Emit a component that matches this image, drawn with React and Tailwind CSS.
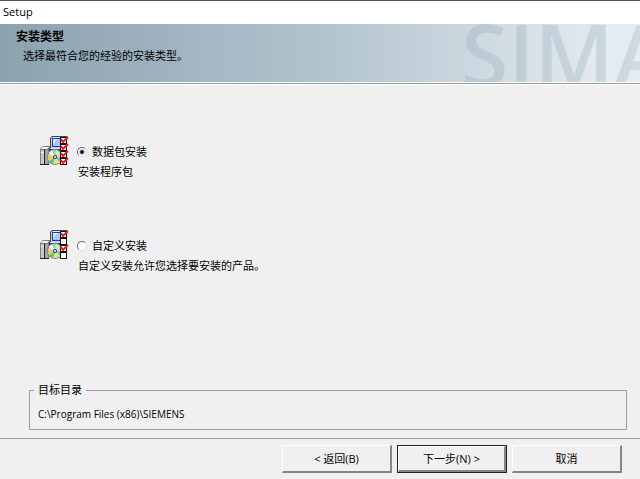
import { useState } from "react";

const options = [
    { id: "package", label: "数据包安装", description: "安装程序包", ticks: [1, 8, 15, 22] },
    { id: "custom", label: "自定义安装", description: "自定义安装允许您选择要安装的产品。", ticks: [1, 15] },
];

const SetupIcon = ({ ticks }) => (
    <svg width="29" height="30" viewBox="0 0 29 30" aria-hidden="true" className="shrink-0">
        {/* case */}
        <path d="M0 13L3 10H10V27L7 29H0Z" fill="#808080" />
        <path d="M1 13L3 11H9L7 13Z" fill="#fff" />
        <path d="M1 14H4V28H1Z" fill="#c8c8c8" />
        <path d="M5 14H8V28H5Z" fill="#a4a4a4" />
        <path d="M4 13H5V29H4ZM0 28H9V29H0Z" fill="#222" />
        <path d="M1 16H3V17H1Z" fill="#fff" />
        {/* monitor */}
        <path d="M10 2L12 0H27V12H10Z" fill="#444" />
        <path d="M11 2L13 1H26V2Z" fill="#e8e8e8" />
        <path d="M11 2H21V12H11Z" fill="#d0d0d0" />
        <path d="M12 2H21V11H12Z" fill="#1c3cb0" />
        <path d="M13 3H20V10H13Z" fill="#a4c8f0" />
        <path d="M13 3H18L13 8Z" fill="#dceafc" />
        <path d="M9 12H21V15H9Z" fill="#333" />
        <path d="M10 12H20V13H10Z" fill="#ddd" />
        {/* disc */}
        <circle cx="15" cy="21" r="8" fill="#888" />
        <circle cx="15" cy="21" r="7" fill="#d6d6d6" />
        <path d="M15 21L9 17L12 14Z" fill="#fff" />
        <path d="M15 21L12 14L16 14Z" fill="#70dce0" />
        <path d="M15 21L16 14L20 16Z" fill="#d8f090" />
        <path d="M15 21L8 20L8 24Z" fill="#e8d030" />
        <path d="M15 21L9 25L13 28Z" fill="#60c870" />
        <path d="M15 21L20 26L22 22Z" fill="#50c8c0" />
        <path d="M15 21L16 28L20 26Z" fill="#f4e060" />
        <circle cx="15" cy="21" r="2" fill="#333" />
        <circle cx="15" cy="21" r="1" fill="#fff" />
        {/* tick boxes */}
        <path d="M20 1H27V29H20Z" fill="#111" />
        {[1, 8, 15, 22].map((y) => (
            <rect key={y} x="21" y={y + 1} width="5" height="5" fill="#fff" />
        ))}
        {ticks.map((y) => (
            <path key={y} d={`M21 ${y + 2}L23 ${y + 5}L28 ${y}`} fill="none" stroke="#e81820" strokeWidth="2" />
        ))}
    </svg>
);

const raised = "border-t-white border-l-white border-r-[#858585] border-b-[#858585]";

const WizardButton = ({ children, isDefault }) => (
    <button
        type="button"
        className={`h-7 w-[110px] ${isDefault ? "border border-[#222]" : ""}`}
    >
        <span className={`flex h-full items-center justify-center border border-r-2 border-b-2 bg-[#f0f0f0] ${raised}`}>
            {children}
        </span>
    </button>
);

const App = () => {
    const [selected, setSelected] = useState("package");

    return (
        <div className="flex min-h-screen flex-col bg-[#f0f0f0] font-['Open_Sans','Noto_Sans_CJK_SC',sans-serif] text-[11px] leading-4 text-black">
            <div className="h-6 border-t border-[#555] bg-white px-[3px] pt-[3px] leading-4">Setup</div>

            <header className="relative h-[58px] overflow-hidden bg-linear-to-r from-[#8ba2af] via-[#b2c3cd] to-[#e4ebf1] to-95% px-4 pt-[5px]">
                <span
                    aria-hidden="true"
                    className="absolute top-[-13px] left-[461px] bg-linear-to-r from-[#b9c8d2] to-[#d2dde5] bg-clip-text text-[86px] leading-[86px] font-semibold text-transparent"
                >
                    SIMA
                </span>
                <div className="relative">
                    <h1 className="text-xs leading-4 font-bold">安装类型</h1>
                    <p className="mt-[3px] ml-[7px]">选择最符合您的经验的安装类型。</p>
                </div>
            </header>
            <div className="h-[3px] border-t border-b border-white bg-[#999]" />

            <main className="flex flex-1 flex-col px-[29px] pt-[51px] pb-2">
                <div className="flex flex-col gap-14 pl-[11px]">
                    {options.map((option) => (
                        <div key={option.id} className="flex h-[38px] items-start gap-2">
                            <SetupIcon ticks={option.ticks} />
                            <div className="pt-2">
                                <label className="flex items-center gap-[5px]">
                                    <input
                                        type="radio"
                                        name="setupType"
                                        checked={selected === option.id}
                                        onChange={() => setSelected(option.id)}
                                        aria-describedby={option.id}
                                        className="size-[10px] appearance-none rounded-full border border-t-[#666] border-r-[#ddd] border-b-[#ddd] border-l-[#666] bg-white checked:bg-[radial-gradient(circle,#000_1px,#fff_3px)]"
                                    />
                                    {option.label}
                                </label>
                                <p id={option.id} className="mt-1 ml-px">{option.description}</p>
                            </div>
                        </div>
                    ))}
                </div>

                <fieldset className="mt-auto -mr-4 h-12 border border-[#a0a0a0] px-2 pt-2">
                    <legend className="-ml-1 px-1">目标目录</legend>
                    <p className="text-[10px] leading-4">C:\Program Files (x86)\SIEMENS</p>
                </fieldset>
            </main>

            <footer className="flex justify-end gap-[5px] border-t border-[#a0a0a0] pt-[6px] pr-[18px] pb-[6px]">
                <WizardButton>&lt; 返回(B)</WizardButton>
                <WizardButton isDefault>下一步(N) &gt;</WizardButton>
                <WizardButton>取消</WizardButton>
            </footer>
        </div>
    );
};

export default App;
